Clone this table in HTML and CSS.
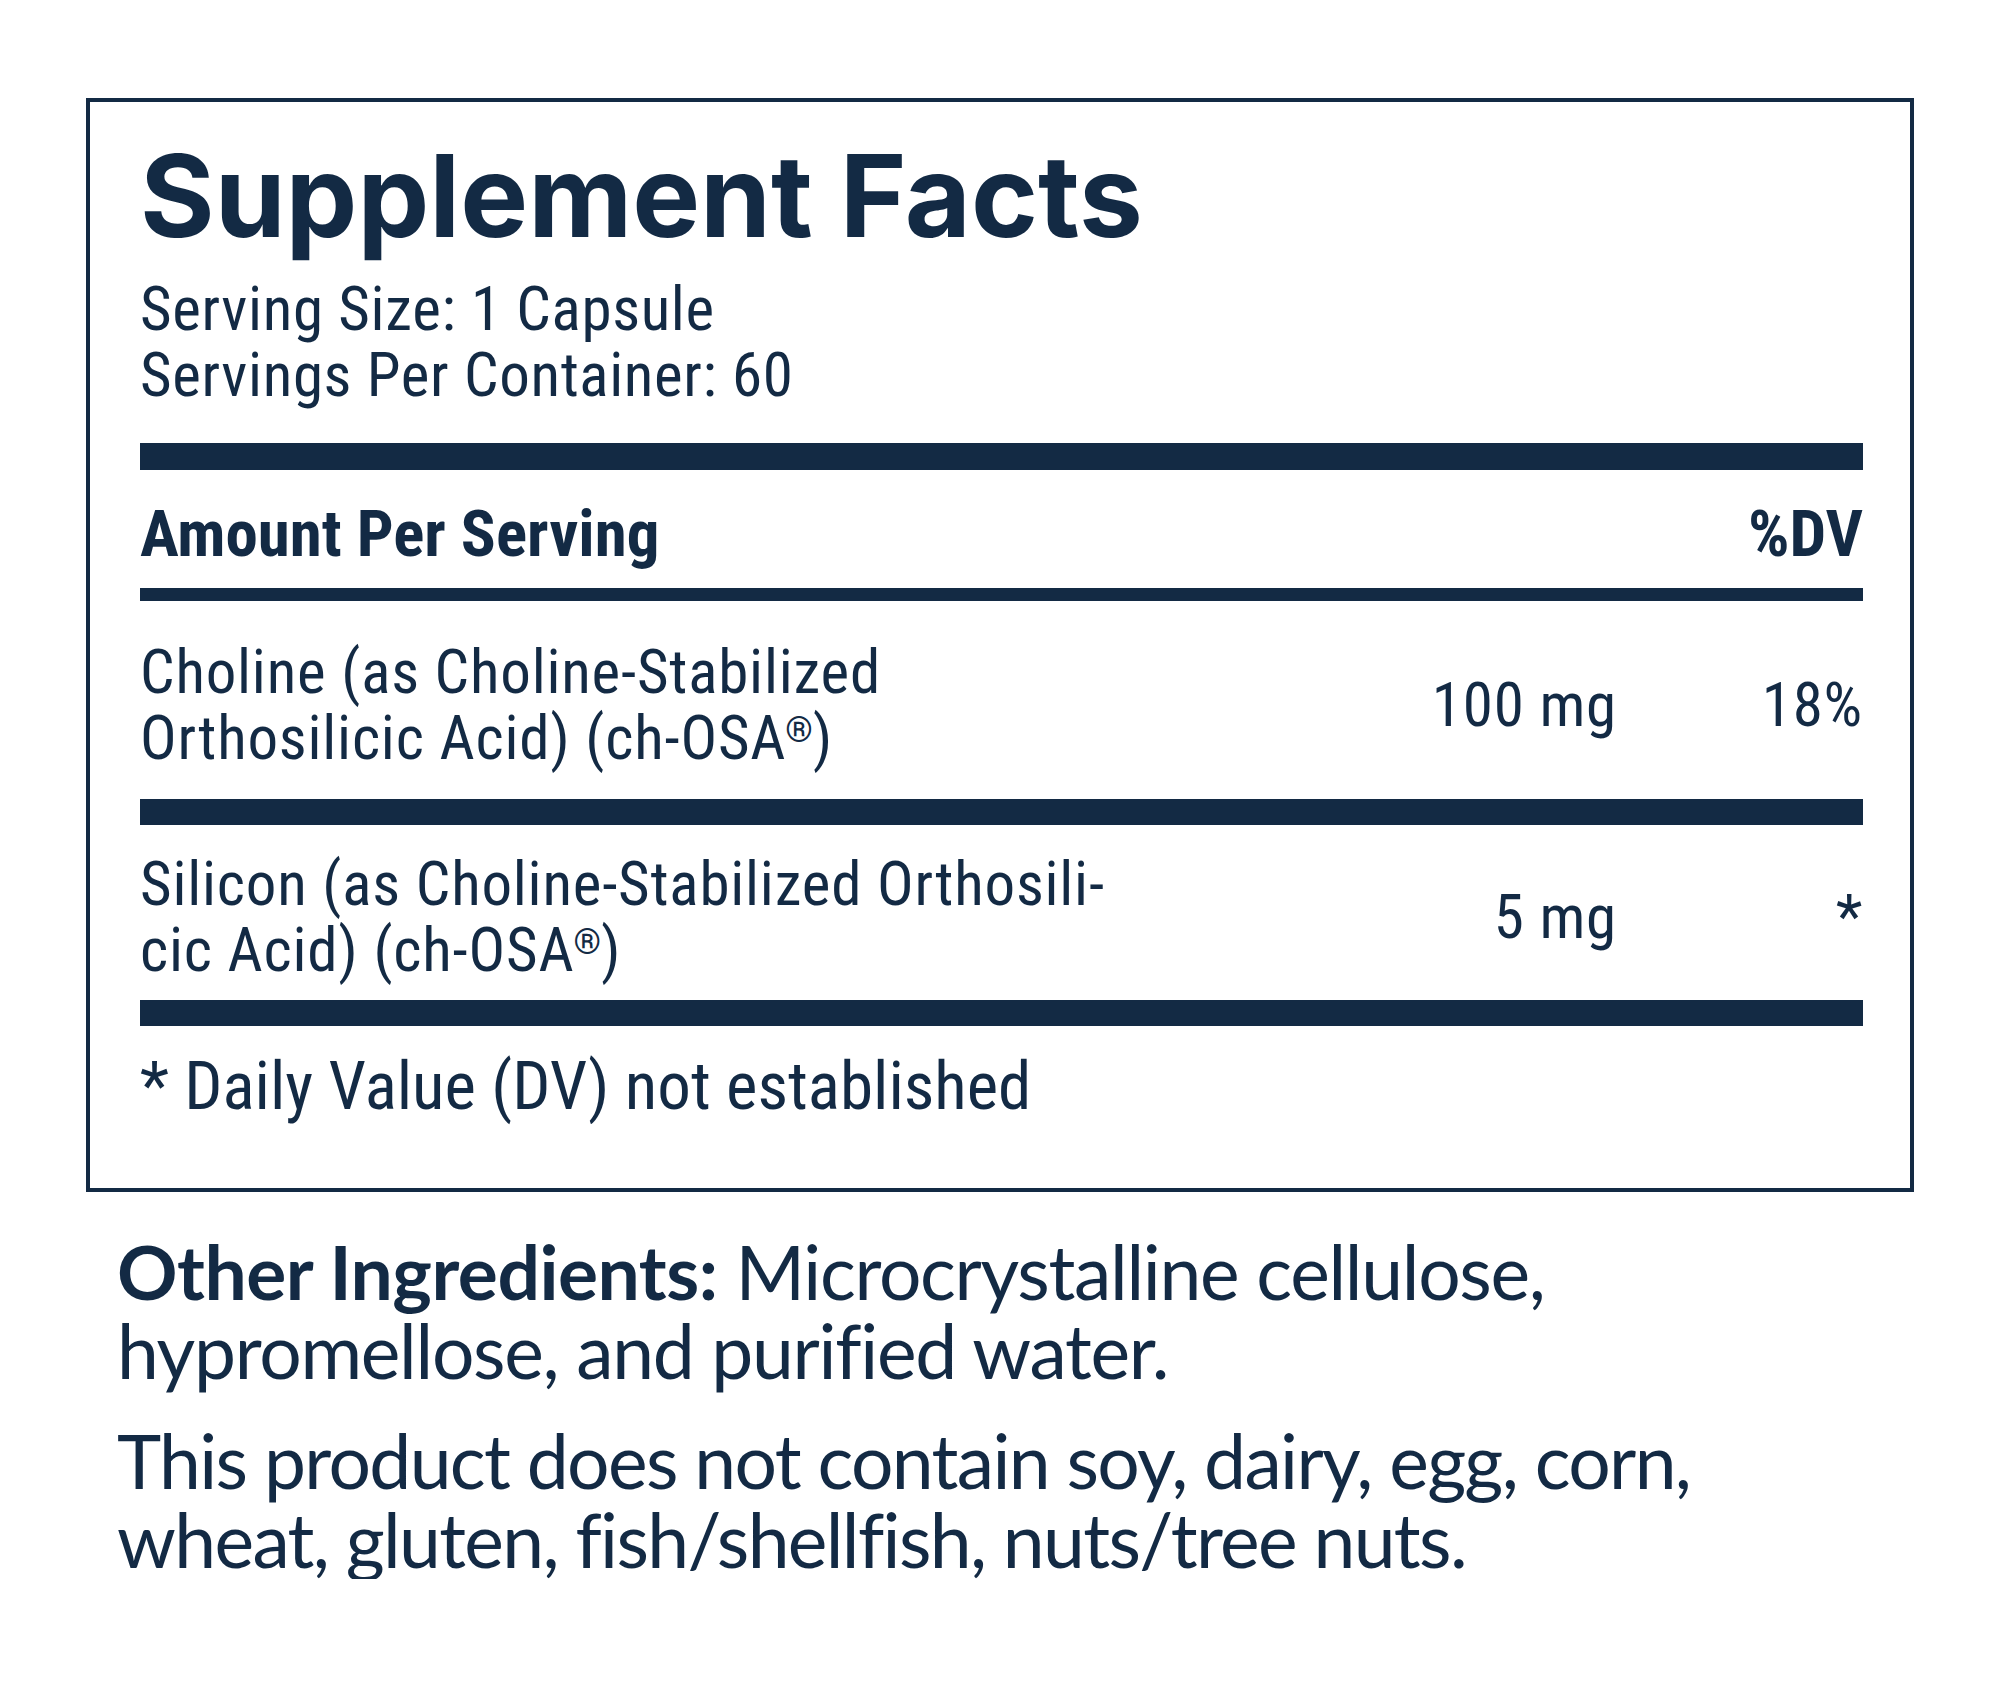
FILE: index.html
```html
<!DOCTYPE html>
<html lang="en">
<head>
<meta charset="utf-8">
<title>Supplement Facts</title>
<link rel="stylesheet" href="styles.css">
</head>
<body>
<main class="page">
  <section class="facts">
    <h1 class="facts-title">Supplement Facts</h1>
    <div class="serving">
      <div>Serving Size: 1 Capsule</div>
      <div>Servings Per Container: 60</div>
    </div>
    <div class="bar bar-thick bar-first"></div>
    <div class="head-row">
      <span>Amount Per Serving</span>
      <span>%DV</span>
    </div>
    <div class="bar bar-thin"></div>
    <div class="row row-choline">
      <div class="name">Choline (as Choline-Stabilized<br>Orthosilicic Acid) (ch-OSA<sup>®</sup>)</div>
      <div class="amount">100 mg</div>
      <div class="dv">18%</div>
    </div>
    <div class="bar bar-thick"></div>
    <div class="row row-silicon">
      <div class="name">Silicon (as Choline-Stabilized Orthosili-<br>cic Acid) (ch-OSA<sup>®</sup>)</div>
      <div class="amount">5 mg</div>
      <div class="dv">*</div>
    </div>
    <div class="bar bar-thick"></div>
    <p class="note">* Daily Value (DV) not established</p>
  </section>
  <section class="other">
    <p class="other-ingredients"><strong>Other Ingredients:</strong> Microcrystalline cellulose,<br>hypromellose, and purified water.</p>
    <p class="allergens">This product does not contain soy, dairy, egg, corn,<br>wheat, gluten, fish/shellfish, nuts/tree nuts.</p>
  </section>
</main>
</body>
</html>
```
FILE: styles.css
```css
html, body {
  margin: 0;
  padding: 0;
  background: #ffffff;
}

body {
  color: #132a44;
  font-family: "Roboto", "Liberation Sans", sans-serif;
}

.page {
  padding-top: 98px;
  padding-left: 86px;
}

.facts {
  box-sizing: border-box;
  width: 1828px;
  border: 4px solid #132a44;
  padding: 26px 47px 66px 50px;
}

.facts-title {
  margin: 0;
  font-family: "Inter", "Liberation Sans", sans-serif;
  font-weight: 700;
  font-size: 114px;
  line-height: 136px;
  letter-spacing: 0;
}

.serving {
  margin-top: 12px;
  font-size: 61px;
  font-stretch: 75%;
  letter-spacing: 0.65px;
  line-height: 66px;
}

.bar {
  background: #132a44;
}

.bar-thick {
  height: 26px;
}

.bar-first {
  margin-top: 35px;
  height: 27px;
}

.bar-thin {
  height: 13px;
  margin-top: 21px;
}

.head-row {
  display: flex;
  justify-content: space-between;
  margin-top: 31px;
  font-size: 65px;
  font-weight: 700;
  font-stretch: 75%;
  line-height: 66px;
}

.row {
  display: grid;
  grid-template-columns: 1fr auto 246px;
  align-items: center;
  font-size: 61px;
  font-stretch: 75%;
  letter-spacing: 0.8px;
  line-height: 66px;
}

.row-choline {
  padding: 38px 0 28px;
}

.row-silicon {
  padding: 26px 0 17px;
}

.row sup {
  font-size: 35px;
  letter-spacing: 0;
  line-height: 0;
  vertical-align: 17px;
  margin-left: -1px;
}

.amount,
.dv {
  text-align: right;
}

.note {
  margin: 24px 0 0;
  font-size: 67px;
  font-stretch: 75%;
  line-height: 72px;
}

.other {
  padding-left: 31px;
  margin-top: 40px;
  font-family: "Lato", "Liberation Sans", sans-serif;
  font-size: 75px;
  line-height: 79px;
  letter-spacing: -1.65px;
}

.other p {
  margin: 0;
}

.other .other-ingredients {
  letter-spacing: -1.3px;
}

.other .allergens {
  margin-top: 31px;
}

.other strong {
  font-weight: 700;
  letter-spacing: -0.5px;
}
```
